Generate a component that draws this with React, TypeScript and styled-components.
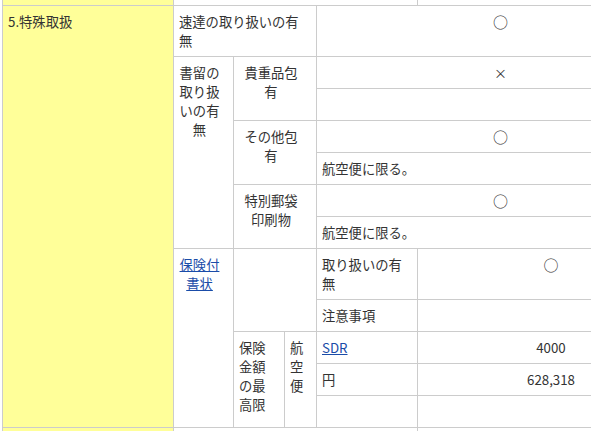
import styled, { createGlobalStyle } from "styled-components";

const GlobalStyle = createGlobalStyle`
  html, body {
    margin: 0;
    padding: 0;
    background: #ffffff;
    overflow: hidden;
  }
`;

const colors = {
  text: "#333333",
  border: "#cccccc",
  yellow: "#ffff99",
  link: "#1a4ca8",
};

type Align = "left" | "center";

const Page = styled.div`
  padding-left: 2px;
  width: 700px;
`;

const Table = styled.table`
  border-collapse: collapse;
  table-layout: fixed;
  width: 682px;
  font-family: "Noto Sans CJK JP", "Noto Sans", sans-serif;
  font-size: 13.3px;
  line-height: 19px;
  color: ${colors.text};
`;

const Cell = styled.td<{ $align?: Align; $yellow?: boolean; $tight?: boolean }>`
  border: 1px solid ${colors.border};
  padding: ${(p) => (p.$tight ? "6px 12px 6px 4px" : "6px 5px")};
  vertical-align: top;
  text-align: ${(p) => p.$align ?? "left"};
  background: ${(p) => (p.$yellow ? colors.yellow : "#ffffff")};
  white-space: nowrap;
`;

const EdgeCell = styled(Cell)`
  border-top: none;
  padding: 0;
  height: 5px;
`;

const TailCell = styled(Cell)`
  height: 40px;
`;

const Mark = styled.span<{ $size?: number }>`
  display: inline-block;
  height: 19px;
  vertical-align: top;
  font-size: ${(p) => p.$size ?? 15}px;
  line-height: 19px;
`;

const Link = styled.a`
  color: ${colors.link};
  text-decoration: underline;
  cursor: pointer;
`;

export default function App() {
  return (
    <Page>
      <GlobalStyle />
      <Table>
        <colgroup>
          <col style={{ width: 171 }} />
          <col style={{ width: 60 }} />
          <col style={{ width: 51 }} />
          <col style={{ width: 32 }} />
          <col style={{ width: 101 }} />
          <col style={{ width: 267 }} />
        </colgroup>
        <tbody>
          <tr>
            <EdgeCell $yellow />
            <EdgeCell colSpan={4} />
            <EdgeCell />
          </tr>
          <tr>
            <Cell $yellow rowSpan={12}>
              5.特殊取扱
            </Cell>
            <Cell colSpan={3}>
              速達の取り扱いの有
              <br />無
            </Cell>
            <Cell colSpan={2} $align="center">
              <Mark>○</Mark>
            </Cell>
          </tr>
          <tr>
            <Cell rowSpan={6} $align="center" $tight>
              書留の
              <br />
              取り扱
              <br />
              いの有
              <br />無
            </Cell>
            <Cell colSpan={2} rowSpan={2} $align="center" $tight>
              貴重品包
              <br />有
            </Cell>
            <Cell colSpan={2} $align="center">
              <Mark $size={13}>×</Mark>
            </Cell>
          </tr>
          <tr>
            <Cell colSpan={2}>&nbsp;</Cell>
          </tr>
          <tr>
            <Cell colSpan={2} rowSpan={2} $align="center" $tight>
              その他包
              <br />有
            </Cell>
            <Cell colSpan={2} $align="center">
              <Mark>○</Mark>
            </Cell>
          </tr>
          <tr>
            <Cell colSpan={2}>航空便に限る。</Cell>
          </tr>
          <tr>
            <Cell colSpan={2} rowSpan={2} $align="center" $tight>
              特別郵袋
              <br />
              印刷物
            </Cell>
            <Cell colSpan={2} $align="center">
              <Mark>○</Mark>
            </Cell>
          </tr>
          <tr>
            <Cell colSpan={2}>航空便に限る。</Cell>
          </tr>
          <tr>
            <Cell rowSpan={5} $align="center" $tight>
              <Link>
                保険付
                <br />
                書状
              </Link>
            </Cell>
            <Cell colSpan={2} rowSpan={2}>
              &nbsp;
            </Cell>
            <Cell>
              取り扱いの有
              <br />無
            </Cell>
            <Cell $align="center">
              <Mark>○</Mark>
            </Cell>
          </tr>
          <tr>
            <Cell>注意事項</Cell>
            <Cell>&nbsp;</Cell>
          </tr>
          <tr>
            <Cell rowSpan={3}>
              保険
              <br />
              金額
              <br />
              の最
              <br />
              高限
            </Cell>
            <Cell rowSpan={3}>
              航
              <br />
              空
              <br />便
            </Cell>
            <Cell>
              <Link>SDR</Link>
            </Cell>
            <Cell $align="center">4000</Cell>
          </tr>
          <tr>
            <Cell>円</Cell>
            <Cell $align="center">628,318</Cell>
          </tr>
          <tr>
            <Cell>&nbsp;</Cell>
            <Cell>&nbsp;</Cell>
          </tr>
          <tr>
            <TailCell $yellow />
            <TailCell colSpan={4} />
            <TailCell />
          </tr>
        </tbody>
      </Table>
    </Page>
  );
}
